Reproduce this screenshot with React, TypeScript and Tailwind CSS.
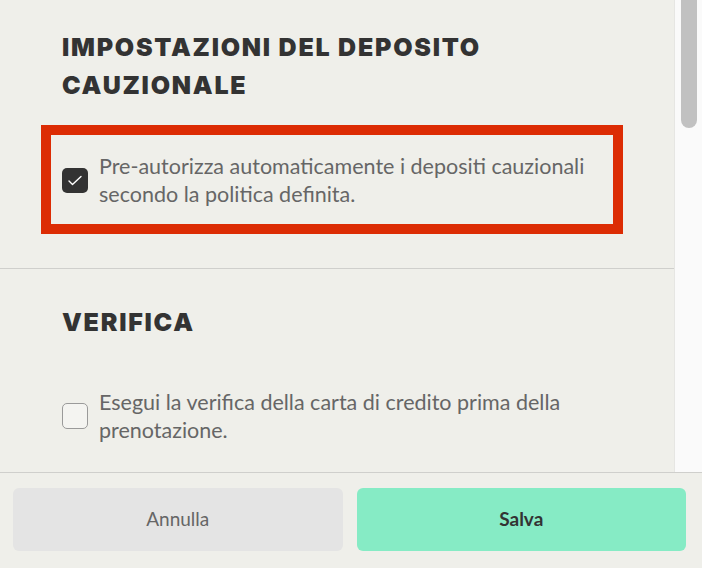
import React from "react";

function Check({ checked }: { checked: boolean }) {
  if (checked) {
    return (
      <div className="h-[25px] w-[26px] shrink-0 rounded-[5px] bg-[#333333] flex items-center justify-center">
        <svg width="26" height="25" viewBox="0 0 26 25" fill="none">
          <polyline points="7,13 10.5,16.5 19,8.5" stroke="#ffffff" strokeWidth="1.4" strokeLinecap="round" strokeLinejoin="round" />
        </svg>
      </div>
    );
  }
  return <div className="h-[26px] w-[26px] shrink-0 rounded-[5px] border border-[#9a9a9a] bg-[#f4f4f1]" />;
}

export default function App() {
  return (
    <div className="flex h-[568px] w-[702px] flex-col overflow-hidden bg-[#efefea]" style={{ fontFamily: "Lato, 'Noto Sans', sans-serif" }}>
      <div className="flex min-h-0 flex-1">
        <div className="min-w-0 flex-1 overflow-hidden">
          <section className="px-[62px] pt-[28px] pb-[34px]">
            <h2 className="text-[25px] font-black uppercase leading-[38px] tracking-[0.07em] text-[#333333]" style={{ fontFamily: "Inter, 'DejaVu Sans', sans-serif" }}>
              Impostazioni del deposito cauzionale
            </h2>
            <div className="-ml-[21px] mt-[21px] w-[582px] border-[10px] border-[#dc2c04] px-[11px] pt-[17px] pb-[16px]">
              <div className="flex items-center gap-[11px]">
                <Check checked />
                <p className="text-[21.5px] leading-[28px] text-[#666666]">
                  Pre-autorizza automaticamente i depositi cauzionali secondo la politica definita.
                </p>
              </div>
            </div>
          </section>
          <div className="h-px bg-[#cfcfcc]" />
          <section className="px-[62px] pt-[34px]">
            <h2 className="text-[25px] font-black uppercase leading-[38px] tracking-[0.07em] text-[#333333]" style={{ fontFamily: "Inter, 'DejaVu Sans', sans-serif" }}>
              Verifica
            </h2>
            <div className="mt-[47px] flex items-center gap-[11px]">
              <Check checked={false} />
              <p className="text-[21.5px] leading-[28px] text-[#666666]">
                Esegui la verifica della carta di credito prima della prenotazione.
              </p>
            </div>
          </section>
        </div>
        <div className="w-[28px] shrink-0 border-l border-[#e6e6e3] bg-[#fafafa] pl-[6px]">
          <div className="-mt-[10px] h-[138px] w-[16px] rounded-full bg-[#c1c1c1]" />
        </div>
      </div>
      <div className="grid grid-cols-2 gap-[14px] border-t border-[#cfcfcc] pl-[13px] pr-[16px] pt-[15px] pb-[17px]">
        <button className="h-[63px] rounded-[6px] bg-[#e4e4e4] text-[19px] text-[#666666]">Annulla</button>
        <button className="h-[63px] rounded-[6px] bg-[#86ebc5] text-[19px] font-bold text-[#333333]">Salva</button>
      </div>
    </div>
  );
}
